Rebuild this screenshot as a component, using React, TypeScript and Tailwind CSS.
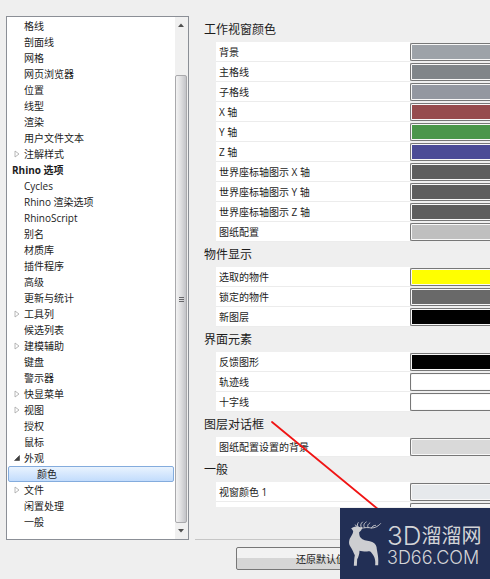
import { useState } from 'react'
import clsx from 'clsx'

interface TreeItem {
  label: string
  level: 0 | 1 | 2
  state?: 'open' | 'closed'
}

interface ColorItem {
  id: string
  label: string
  color: string
}

interface ColorGroup {
  title: string
  items: ColorItem[]
}

const TREE: TreeItem[] = [
  { label: '格线', level: 1 },
  { label: '剖面线', level: 1 },
  { label: '网格', level: 1 },
  { label: '网页浏览器', level: 1 },
  { label: '位置', level: 1 },
  { label: '线型', level: 1 },
  { label: '渲染', level: 1 },
  { label: '用户文件文本', level: 1 },
  { label: '注解样式', level: 1, state: 'closed' },
  { label: 'Rhino 选项', level: 0 },
  { label: 'Cycles', level: 1 },
  { label: 'Rhino 渲染选项', level: 1 },
  { label: 'RhinoScript', level: 1 },
  { label: '别名', level: 1 },
  { label: '材质库', level: 1 },
  { label: '插件程序', level: 1 },
  { label: '高级', level: 1 },
  { label: '更新与统计', level: 1 },
  { label: '工具列', level: 1, state: 'closed' },
  { label: '候选列表', level: 1 },
  { label: '建模辅助', level: 1, state: 'closed' },
  { label: '键盘', level: 1 },
  { label: '警示器', level: 1 },
  { label: '快显菜单', level: 1, state: 'closed' },
  { label: '视图', level: 1, state: 'closed' },
  { label: '授权', level: 1 },
  { label: '鼠标', level: 1 },
  { label: '外观', level: 1, state: 'open' },
  { label: '颜色', level: 2 },
  { label: '文件', level: 1, state: 'closed' },
  { label: '闲置处理', level: 1 },
  { label: '一般', level: 1 },
]

const GROUPS: ColorGroup[] = [
  {
    title: '工作视窗颜色',
    items: [
      { id: 'background', label: '背景', color: 'bg-[#9da2a8]' },
      { id: 'major-grid', label: '主格线', color: 'bg-[#808589]' },
      { id: 'minor-grid', label: '子格线', color: 'bg-[#9397a0]' },
      { id: 'axis-x', label: 'X 轴', color: 'bg-[#964b4d]' },
      { id: 'axis-y', label: 'Y 轴', color: 'bg-[#4a964a]' },
      { id: 'axis-z', label: 'Z 轴', color: 'bg-[#4b4b96]' },
      { id: 'world-x', label: '世界座标轴图示 X 轴', color: 'bg-[#5d5d5d]' },
      { id: 'world-y', label: '世界座标轴图示 Y 轴', color: 'bg-[#5d5d5d]' },
      { id: 'world-z', label: '世界座标轴图示 Z 轴', color: 'bg-[#5d5d5d]' },
      { id: 'layout', label: '图纸配置', color: 'bg-[#bfbfbf]' },
    ],
  },
  {
    title: '物件显示',
    items: [
      { id: 'selected', label: '选取的物件', color: 'bg-[#ffff00]' },
      { id: 'locked', label: '锁定的物件', color: 'bg-[#696969]' },
      { id: 'new-layer', label: '新图层', color: 'bg-black' },
    ],
  },
  {
    title: '界面元素',
    items: [
      { id: 'feedback', label: '反馈图形', color: 'bg-black' },
      { id: 'tracking', label: '轨迹线', color: 'bg-white' },
      { id: 'crosshair', label: '十字线', color: 'bg-white' },
    ],
  },
  {
    title: '图层对话框',
    items: [{ id: 'layout-bg', label: '图纸配置设置的背景', color: 'bg-[#d9d9d9]' }],
  },
  {
    title: '一般',
    items: [{ id: 'window-1', label: '视窗颜色 1', color: 'bg-[#e6e9ec]' }],
  },
]

function Expander({ state }: { state?: 'open' | 'closed' }) {
  return (
    <svg viewBox="0 0 6 8" className="h-2 w-[6px] shrink-0" aria-hidden="true">
      {state === 'closed' && <path d="M1 1v6l4-3z" fill="#fff" stroke="#a6a6a6" strokeWidth="0.8" />}
      {state === 'open' && <path d="M5.5 1.5v5h-5z" fill="#404040" stroke="#262626" strokeWidth="0.5" />}
    </svg>
  )
}

function TreeScrollbar() {
  return (
    <div className="flex w-[13px] shrink-0 flex-col items-center bg-[#f0f0f0] pr-px">
      <svg viewBox="0 0 6 4" className="my-[6px] h-1 w-[6px]" aria-hidden="true">
        <path d="M3 0.5L6 4H0z" fill="#505050" />
      </svg>
      <div className="mt-[42px] flex w-full flex-1 flex-col items-center justify-center gap-px rounded-[2px] border border-[#a9a9ac] bg-linear-to-r from-[#f3f3f3] via-[#dedee0] to-[#c3c4c8]">
        <span className="h-px w-[5px] bg-[#66666a]" />
        <span className="h-px w-[5px] bg-[#66666a]" />
        <span className="h-px w-[5px] bg-[#66666a]" />
      </div>
      <svg viewBox="0 0 6 4" className="my-[6px] h-1 w-[6px]" aria-hidden="true">
        <path d="M0 0h6L3 3.5z" fill="#505050" />
      </svg>
    </div>
  )
}

function OptionTree() {
  const [selected, setSelected] = useState('颜色')

  return (
    <nav className="flex w-[183px] shrink-0 border border-[#8b8f96] bg-white">
      <ul className="min-w-0 flex-1 px-px pt-px pb-2">
        {TREE.map((item) => (
          <li key={item.label}>
            <button
              onClick={() => setSelected(item.label)}
              className={clsx(
                'flex h-4 w-full items-center gap-1 rounded-[2px] border text-left whitespace-nowrap',
                item.level === 0 && 'pl-[3px] font-bold',
                item.level === 1 && 'pl-[5px]',
                item.level === 2 && 'pl-7',
                selected === item.label
                  ? 'border-[#84acdd] bg-linear-to-b from-[#e9f3fe] to-[#c2dcfc]'
                  : 'border-transparent',
              )}
            >
              {item.level === 1 && <Expander state={item.state} />}
              {item.label}
            </button>
          </li>
        ))}
      </ul>
      <TreeScrollbar />
    </nav>
  )
}

function ColorRow({ item }: { item: ColorItem }) {
  return (
    <div className="flex h-5">
      <label
        htmlFor={item.id}
        className="flex w-[194px] shrink-0 items-center border-b border-[#ececec] bg-white pl-[3px]"
      >
        {item.label}
      </label>
      <div className="flex-1 py-px">
        <button
          id={item.id}
          className="block h-[18px] w-full rounded-l-[2px] border border-r-0 border-[#777777] bg-[#f8f8f8] p-px pr-0"
        >
          <span className={clsx('block h-full', item.color)} />
        </button>
      </div>
    </div>
  )
}

function Deer() {
  return (
    <svg viewBox="0 0 104 138" className="h-[46px] w-[35px] shrink-0" aria-hidden="true">
      <path
        d="M9 22C14 19 20 17 26 16C30 17 34 20 43 21L38 29L33 34C33 43 34 50 43 55C51 60 64 60 72 63C82 67 86 75 86 85C88 98 92 110 90 133H81C83 117 79 107 71 97C68 92 65 91 60 91C50 93 40 89 34 89C34 99 31 107 27 115L26 134H17C18 122 18 111 20 103C16 95 13 86 6 76C0 66 3 55 9 46C12 40 15 36 15 30Z"
        fill="#cdced1"
      />
      <g fill="none" stroke="#cdced1" strokeWidth="2.8" strokeLinecap="round">
        <path d="M34 20C42 24 50 18 63 20C76 23 88 18 97 8" />
        <path d="M32 19C27 15 26 10 30 5" />
        <path d="M40 20C36 14 37 8 43 3" />
        <path d="M49 19C45 14 47 7 54 3" />
        <path d="M60 19C56 14 60 9 65 6" />
        <path d="M70 21C72 16 76 13 82 13" />
        <path d="M28 17L21 12" />
      </g>
    </svg>
  )
}

function Watermark() {
  return (
    <div className="absolute right-0 bottom-0 flex h-[71px] w-[150px] items-center gap-1 bg-[#222f55] pl-2 text-[#d3d4d7]">
      <Deer />
      <div className="whitespace-nowrap">
        <p className="flex items-center text-[20px] leading-7">
          <span className="font-[Inter] text-[26px] font-light">3D</span>
          <span>溜溜网</span>
        </p>
        <p className="font-[Inter] text-[18px] leading-4 font-light">3D66.COM</p>
      </div>
    </div>
  )
}

export default function App() {
  return (
    <main className="relative min-h-screen overflow-hidden bg-[#efefef] pt-4 pb-[9px] font-['Open_Sans','Noto_Sans_CJK_SC',sans-serif] text-[10px] leading-[14px] text-[#1c1c1c]">
      <div className="flex gap-[6px] pl-[6px]">
        <OptionTree />

        <section className="min-w-0 flex-1 border-b border-[#c6c6c6] pt-px pb-8">
          {GROUPS.map((group) => (
            <div key={group.title}>
              <h2 className="flex h-[25px] items-center pl-[9px] text-[12px]">{group.title}</h2>
              <div className="pl-[21px]">
                {group.items.map((item) => (
                  <ColorRow key={item.id} item={item} />
                ))}
              </div>
            </div>
          ))}
          {/* next row, cut off by the scroll area */}
          <div className="flex h-[5px] pl-[21px]">
            <div className="w-[194px] bg-white" />
            <div className="mt-px flex-1 rounded-tl-[2px] border-t border-l border-[#777777] bg-[#f8f8f8]" />
          </div>
        </section>
      </div>

      <div className="mt-[7px] pl-[236px]">
        <button className="h-[23px] w-[170px] rounded-[2px] border border-[#777777] bg-linear-to-b from-[#f2f2f2] from-50% to-[#d6d6d6] to-50%">
          还原默认值
        </button>
      </div>

      <svg viewBox="0 0 110 90" className="absolute top-[421px] left-[271px] h-[90px] w-[110px]" aria-hidden="true">
        <path d="M1 1L108 89" stroke="#f01414" strokeWidth="1.8" strokeLinecap="round" />
      </svg>

      <Watermark />
    </main>
  )
}
